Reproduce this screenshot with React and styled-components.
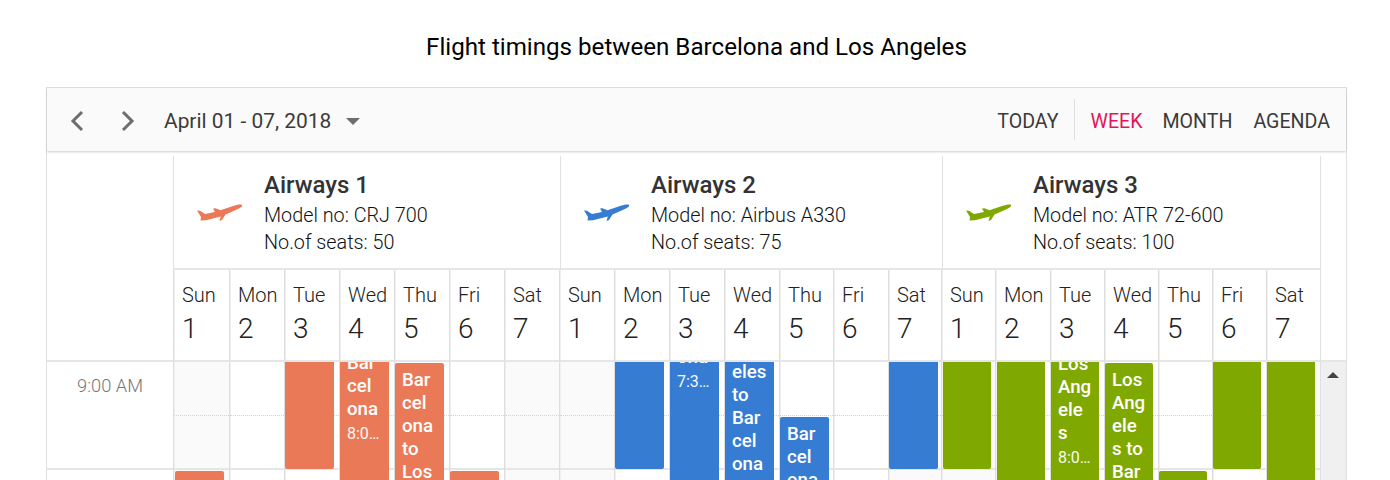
import React from 'react';
import styled, { createGlobalStyle } from 'styled-components';

const ORANGE = '#ea7a57';
const BLUE = '#357cd2';
const GREEN = '#7fa900';

const GlobalStyle = createGlobalStyle`
  html, body {
    margin: 0;
    height: 480px;
    overflow: hidden;
    background: #fff;
    font-family: Roboto, "Liberation Sans", sans-serif;
  }
`;

const Page = styled.div`
  padding: 0 43px 0 46px;
`;

const Title = styled.h1`
  margin: 0;
  height: 87px;
  line-height: 94px;
  text-align: center;
  font-size: 24.15px;
  font-weight: 400;
  color: #000;
`;

const Scheduler = styled.div`
  border: 1px solid #e0e0e0;
`;

const Toolbar = styled.div`
  height: 63px;
  box-sizing: border-box;
  padding-top: 3px;
  display: flex;
  align-items: center;
  justify-content: space-between;
  background: #fafafa;
  box-shadow: 0 1px 2px rgba(0, 0, 0, 0.2);
  position: relative;
  z-index: 2;
`;

const ToolbarGroup = styled.div`
  display: flex;
  align-items: center;
`;

const NavButton = styled.button`
  width: 50px;
  height: 36px;
  padding: 0;
  border: 0;
  background: none;
  display: flex;
  align-items: center;
  justify-content: center;
  color: #6d6d6d;
`;

const NavGroup = styled.div`
  display: flex;
  gap: 1px;
  padding-left: 5px;
`;

const DateRange = styled.div`
  margin-left: 11px;
  font-size: 20.9px;
  color: #3a3a3a;
`;

const Caret = styled.span`
  margin-left: 15px;
  width: 0;
  height: 0;
  border-left: 7px solid transparent;
  border-right: 7px solid transparent;
  border-top: 7px solid #6d6d6d;
`;

const ViewButton = styled.div`
  font-size: 19.6px;
  color: ${props => (props.$active ? '#e3165b' : '#3a3a3a')};
  margin-left: ${props => props.$gap || 0}px;
  margin-right: ${props => props.$end || 0}px;
`;

const Divider = styled.div`
  width: 1px;
  height: 41px;
  margin: -3px 0 0 15px;
  background: #e0e0e0;
`;

const HeaderRow = styled.div`
  display: grid;
  grid-template-columns: 126px ${props => props.$tracks} 1fr;
`;

const Header = styled.div`
  padding-top: 5px;
`;

const AirwayCell = styled.div`
  height: 114px;
  box-sizing: border-box;
  border-left: 1px solid #e0e0e0;
  border-bottom: 2px solid #e6e6e6;
  display: flex;
  align-items: center;
  padding: 2px 0 0 23px;
`;

const Plane = styled.svg`
  width: 46px;
  height: 18px;
  flex: none;
  margin-right: 21px;
  fill: ${props => props.$color};
`;

const AirwayName = styled.div`
  font-size: 24px;
  font-weight: 500;
  color: #333;
  line-height: 30px;
  margin-bottom: 2px;
`;

const AirwayInfo = styled.div`
  font-size: 19.8px;
  font-weight: 300;
  color: #111;
  line-height: 27px;
`;

const DayCell = styled.div`
  height: 92px;
  box-sizing: border-box;
  border-left: 1px solid #dedede;
  box-shadow: inset 1px 0 0 #f0f0f0;
  border-bottom: 2px solid #e6e6e6;
  padding: 11px 0 0 8px;
  color: #222;
  overflow: hidden;
`;

const DayName = styled.div`
  font-size: 20px;
  font-weight: 300;
  line-height: 28px;
  white-space: nowrap;
`;

const DayNumber = styled.div`
  font-size: 28px;
  font-weight: 300;
  line-height: 40px;
`;

const TimeHead = styled.div`
  border-bottom: 2px solid #e6e6e6;
`;

const EdgeCell = styled.div`
  border-left: 1px solid #e0e0e0;
  border-bottom: ${props => (props.$ruled ? '2px solid #e6e6e6' : '0')};
`;

const Body = styled.div`
  display: grid;
  grid-template-columns: 126px ${props => props.$tracks} 1fr;
  height: 240px;
`;

const TimeColumn = styled.div``;

const TimeSlot = styled.div`
  height: 108px;
  box-sizing: border-box;
  border-bottom: 2px solid #e6e6e6;
  padding: 13px 30px 0 0;
  text-align: right;
  font-size: 18.3px;
  font-weight: 300;
  color: #777;
`;

const DayColumn = styled.div`
  position: relative;
  overflow: hidden;
  border-left: 1px solid #dedede;
  box-shadow: inset 1px 0 0 #f0f0f0;
  background: ${props => (props.$weekend ? '#fafafa' : '#fff')};
`;

const Slot = styled.div`
  height: 108px;
  box-sizing: border-box;
  border-bottom: 2px solid #e6e6e6;
  position: relative;
  &::before {
    content: '';
    position: absolute;
    left: 0;
    right: 0;
    top: 53px;
    border-top: 1px dotted #d4d4d4;
  }
`;

const Scrollbar = styled.div`
  background: #f0f0f0;
  position: relative;
  border-left: 1px solid #e0e0e0;
  &::before {
    content: '';
    position: absolute;
    top: 10px;
    left: 6px;
    border-left: 6px solid transparent;
    border-right: 6px solid transparent;
    border-bottom: 6px solid #444;
  }
`;

const Event = styled.div`
  position: absolute;
  box-sizing: border-box;
  border-radius: 2px;
  padding: 6px 7px 0 7px;
  color: #fff;
  overflow: hidden;
`;

const EventTitle = styled.div`
  font-size: 18.67px;
  font-weight: 500;
  line-height: 23px;
  overflow-wrap: anywhere;
`;

const EventTime = styled.div`
  font-size: 16px;
  line-height: 26px;
  opacity: 0.95;
  white-space: nowrap;
  overflow: hidden;
  text-overflow: ellipsis;
`;

const PlaneIcon = ({ color }) => (
  <Plane $color={color} viewBox="0 0 46 18">
    <path d="M0 6.5 L3 6.7 L8 10 L18 8 L16 4.5 L18.5 4.3 L23.5 6.3 L36 2 C40 .6 44 0 45 1 C46 2 44 3.4 42 4.4 L32 9 L28.5 10.5 L25 16 L22.5 17 L23.8 12.5 L9 16.2 L3.5 16.6 L4 13 Z" />
  </Plane>
);

const BC = 'Barcelona to Los Angeles';
const LA = 'Los Angeles to Barcelona';

const airways = [
  { name: 'Airways 1', model: 'CRJ 700', seats: 50, color: ORANGE, eventWidth: 49, events: [
    [{ top: 109, height: 60, left: 1 }],
    [],
    [{ top: -90, height: 197 }],
    [{ top: -16, height: 180, title: 'Barcelona', time: '8:00 AM' }],
    [{ top: 1, height: 200, title: BC }],
    [{ top: 109, height: 60 }],
    [],
  ] },
  { name: 'Airways 2', model: 'Airbus A330', seats: 75, color: BLUE, eventWidth: 49, events: [
    [],
    [{ top: -90, height: 197 }],
    [{ top: -68, height: 260, title: 'Barcelona', time: '7:30 AM' }],
    [{ top: -53, height: 260, title: LA }],
    [{ top: 55, height: 160, title: 'Barcelona' }],
    [],
    [{ top: -90, height: 197 }],
  ] },
  { name: 'Airways 3', model: 'ATR 72-600', seats: 100, color: GREEN, eventWidth: 48, events: [
    [{ top: -90, height: 197, left: 1 }],
    [{ top: -90, height: 260, left: 1 }],
    [{ top: -15, height: 200, title: 'Los Angeles', time: '8:00 AM' }],
    [{ top: 1, height: 200, title: LA }],
    [{ top: 109, height: 60 }],
    [{ top: -90, height: 197 }],
    [{ top: -90, height: 260 }],
  ] },
];

const days = ['Sun', 'Mon', 'Tue', 'Wed', 'Thu', 'Fri', 'Sat'];
const widths = [56, 55, 55, 55, 55, 55, 55, 55, 55, 55, 55, 54, 55, 53, 54, 55, 54, 54, 54, 54, 54];
const tracks = widths.map(w => `${w}px`).join(' ');

const App = () => (
  <Page>
    <GlobalStyle />
    <Title>Flight timings between Barcelona and Los Angeles</Title>
    <Scheduler>
      <Toolbar>
        <ToolbarGroup>
          <NavGroup>
            <NavButton aria-label="Previous">
              <svg width="16" height="24" viewBox="0 0 16 24" fill="none" stroke="currentColor" strokeWidth="3"><path d="M13 3 L4 12 L13 21" /></svg>
            </NavButton>
            <NavButton aria-label="Next">
              <svg width="16" height="24" viewBox="0 0 16 24" fill="none" stroke="currentColor" strokeWidth="3"><path d="M3 3 L12 12 L3 21" /></svg>
            </NavButton>
          </NavGroup>
          <DateRange>April 01 - 07, 2018</DateRange>
          <Caret />
        </ToolbarGroup>
        <ToolbarGroup>
          <ViewButton>TODAY</ViewButton>
          <Divider />
          <ViewButton $active $gap={16}>WEEK</ViewButton>
          <ViewButton $gap={20}>MONTH</ViewButton>
          <ViewButton $gap={21} $end={16}>AGENDA</ViewButton>
        </ToolbarGroup>
      </Toolbar>
      <Header>
        <HeaderRow $tracks="387px 382px 378px">
          <div />
          {airways.map(a => (
            <AirwayCell key={a.name}>
              <PlaneIcon color={a.color} />
              <div>
                <AirwayName>{a.name}</AirwayName>
                <AirwayInfo>Model no: {a.model}</AirwayInfo>
                <AirwayInfo>No.of seats: {a.seats}</AirwayInfo>
              </div>
            </AirwayCell>
          ))}
          <EdgeCell />
        </HeaderRow>
        <HeaderRow $tracks={tracks}>
          <TimeHead />
          {airways.map(a =>
            days.map((d, j) => (
              <DayCell key={`${a.name}${d}`}>
                <DayName>{d}</DayName>
                <DayNumber>{j + 1}</DayNumber>
              </DayCell>
            ))
          )}
          <EdgeCell $ruled />
        </HeaderRow>
      </Header>
      <Body $tracks={tracks}>
        <TimeColumn>
          <TimeSlot>9:00 AM</TimeSlot>
          <TimeSlot />
        </TimeColumn>
        {airways.map(a =>
          a.events.map((list, j) => (
            <DayColumn key={`${a.name}${j}`} $weekend={j === 0 || j === 6}>
              <Slot />
              <Slot />
              {list.map(ev => (
                <Event
                  key={ev.top}
                  style={{ top: ev.top, left: ev.left || 0, width: a.eventWidth, height: ev.height, background: a.color }}
                >
                  {ev.title && <EventTitle>{ev.title}</EventTitle>}
                  {ev.time && <EventTime>{ev.time}</EventTime>}
                </Event>
              ))}
            </DayColumn>
          ))
        )}
        <Scrollbar />
      </Body>
    </Scheduler>
  </Page>
);

export default App;
